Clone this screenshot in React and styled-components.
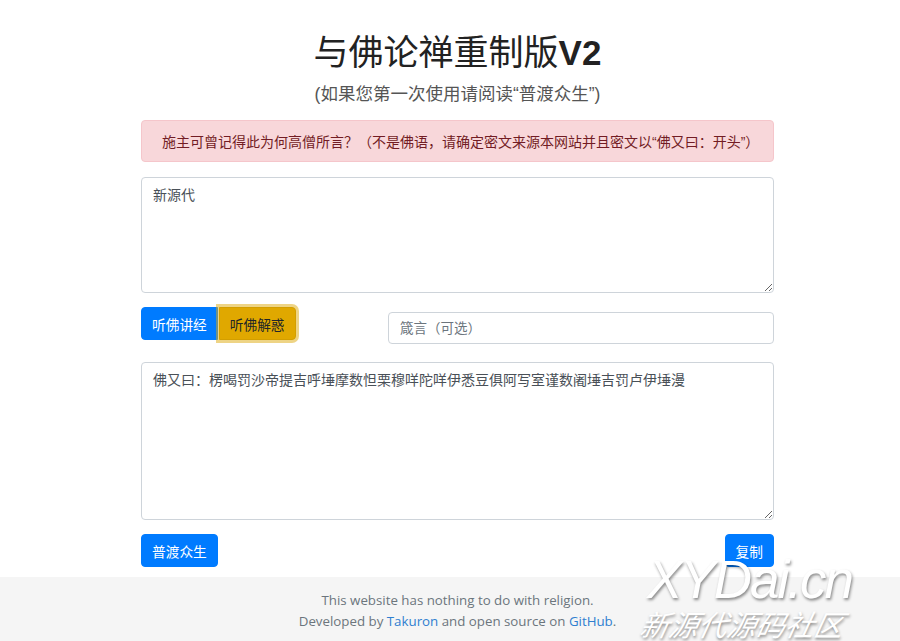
import React, { useState } from "react";
import styled, { createGlobalStyle } from "styled-components";

const Strings = {
  title: "与佛论禅重制版",
  version: "V2",
  subtitle: "(如果您第一次使用请阅读“普渡众生”)",
  alert:
    "施主可曾记得此为何高僧所言？（不是佛语，请确定密文来源本网站并且密文以“佛又曰：开头”）",
  input: "新源代",
  encode: "听佛讲经",
  decode: "听佛解惑",
  keyHint: "箴言（可选）",
  output:
    "佛又曰：楞喝罚沙帝提吉呼埵摩数怛栗穆咩陀咩伊悉豆俱阿写室谨数阇埵吉罚卢伊埵漫",
  help: "普渡众生",
  copy: "复制",
};

const CJK = `"Liberation Sans", "Noto Sans CJK SC", sans-serif`;

const GlobalStyle = createGlobalStyle`
  html, body {
    margin: 0;
    padding: 0;
    background: #fff;
  }
  body {
    font-family: ${CJK};
    color: #212529;
  }
`;

const App = () => {
  const [plain, setPlain] = useState(Strings.input);
  const [key, setKey] = useState("");
  const [cipher, setCipher] = useState(Strings.output);

  return (
    <Page>
      <GlobalStyle />
      <Main>
        <Title>
          {Strings.title}
          <Version>{Strings.version}</Version>
        </Title>
        <Subtitle>{Strings.subtitle}</Subtitle>
        <Alert>{Strings.alert}</Alert>
        <TextBox
          height={116}
          value={plain}
          onChange={(e) => setPlain(e.target.value)}
        />
        <ControlRow>
          <BtnGroup>
            <Button variant="primary" joined="left">
              {Strings.encode}
            </Button>
            <Button variant="warning" joined="right" focused>
              {Strings.decode}
            </Button>
          </BtnGroup>
          <KeyInput
            placeholder={Strings.keyHint}
            value={key}
            onChange={(e) => setKey(e.target.value)}
          />
        </ControlRow>
        <TextBox
          height={158}
          gap={18}
          value={cipher}
          onChange={(e) => setCipher(e.target.value)}
        />
        <BottomRow>
          <Button variant="primary">{Strings.help}</Button>
          <Button variant="primary">{Strings.copy}</Button>
        </BottomRow>
      </Main>
      <Footer>
        <FooterLine>This website has nothing to do with religion.</FooterLine>
        <FooterLine>
          Developed by <Link href="#">Takuron</Link> and open source on{" "}
          <Link href="#">GitHub</Link>.
        </FooterLine>
      </Footer>
      <Watermark>
        <WmBig>XYDai.cn</WmBig>
        <WmSmall>新源代源码社区</WmSmall>
      </Watermark>
    </Page>
  );
};

const Page = styled.div`
  position: relative;
  width: 900px;
  height: 641px;
  overflow: hidden;
  display: flex;
  flex-direction: column;
`;

const Main = styled.div`
  width: 633px;
  margin-left: 141px;
  padding-top: 28px;
  display: flex;
  flex-direction: column;
`;

const Title = styled.h1`
  margin: 0;
  text-align: center;
  font-size: 35px;
  font-weight: 400;
  line-height: 50px;
  color: #222;
`;

const Version = styled.span`
  font-weight: 700;
`;

const Subtitle = styled.div`
  text-align: center;
  font-size: 17.5px;
  line-height: 26px;
  color: #555;
  margin-top: 3px;
`;

const Alert = styled.div`
  margin-top: 13px;
  height: 42px;
  box-sizing: border-box;
  display: flex;
  align-items: center;
  padding: 0 20px;
  background: #f8d7da;
  border: 1px solid #f5c6cb;
  border-radius: 4px;
  color: #721c24;
  font-size: 14px;
  white-space: nowrap;
`;

const TextBox = styled.textarea`
  margin-top: ${(p) => p.gap || 15}px;
  height: ${(p) => p.height}px;
  box-sizing: border-box;
  width: 100%;
  padding: 7px 11px;
  border: 1px solid #ced4da;
  border-radius: 4px;
  font-family: ${CJK};
  font-size: 14px;
  line-height: 20px;
  color: #495057;
  resize: vertical;
  outline: none;
`;

const ControlRow = styled.div`
  margin-top: 14px;
  display: flex;
  align-items: flex-start;
  justify-content: space-between;
`;

const BtnGroup = styled.div`
  display: flex;
`;

const colors = {
  primary: { bg: "#007bff", border: "#007bff", fg: "#fff" },
  warning: { bg: "#e0a800", border: "#d39e00", fg: "#212529" },
};

const Button = styled.button`
  height: 33px;
  padding: 0 10px;
  font-family: ${CJK};
  font-size: 13.7px;
  color: ${(p) => colors[p.variant].fg};
  background: ${(p) => colors[p.variant].bg};
  border: 1px solid ${(p) => colors[p.variant].border};
  border-radius: ${(p) =>
    p.joined === "left" ? "4px 0 0 4px" : p.joined === "right" ? "0 4px 4px 0" : "4px"};
  box-shadow: ${(p) => (p.focused ? "0 0 0 3px rgba(222, 170, 12, 0.5)" : "none")};
  margin-left: ${(p) => (p.joined === "right" ? "1px" : "0")};
  cursor: pointer;
`;

const KeyInput = styled.input`
  margin-top: 5px;
  width: 386px;
  height: 32px;
  box-sizing: border-box;
  padding: 0 11px;
  border: 1px solid #ced4da;
  border-radius: 4px;
  font-family: ${CJK};
  font-size: 13.5px;
  color: #495057;
  outline: none;

  &::placeholder {
    color: #6c757d;
  }
`;

const BottomRow = styled.div`
  margin-top: 14px;
  display: flex;
  justify-content: space-between;
`;

const Footer = styled.footer`
  margin-top: 10px;
  flex: 1;
  background: #f5f5f5;
  padding-top: 13px;
  padding-left: 15px;
  text-align: center;
  font-family: "Open Sans", "Noto Sans", sans-serif;
  font-size: 13.3px;
  color: #6c757d;
`;

const FooterLine = styled.div`
  line-height: 21px;
`;

const Link = styled.a`
  color: #2f7fd0;
  text-decoration: none;
`;

const Watermark = styled.div`
  position: absolute;
  left: 641px;
  top: 553px;
  display: flex;
  flex-direction: column;
  color: #fff;
  font-style: italic;
  pointer-events: none;
  text-shadow: 1px 2px 3px rgba(0, 0, 0, 0.45);
`;

const WmBig = styled.div`
  font-family: "Liberation Sans", sans-serif;
  font-size: 53px;
  line-height: 54px;
  letter-spacing: -2px;
  margin-left: 6px;
`;

const WmSmall = styled.div`
  font-family: "Noto Sans CJK SC", sans-serif;
  font-size: 29px;
  line-height: 32px;
  transform: skewX(-12deg);
`;

export default App;
